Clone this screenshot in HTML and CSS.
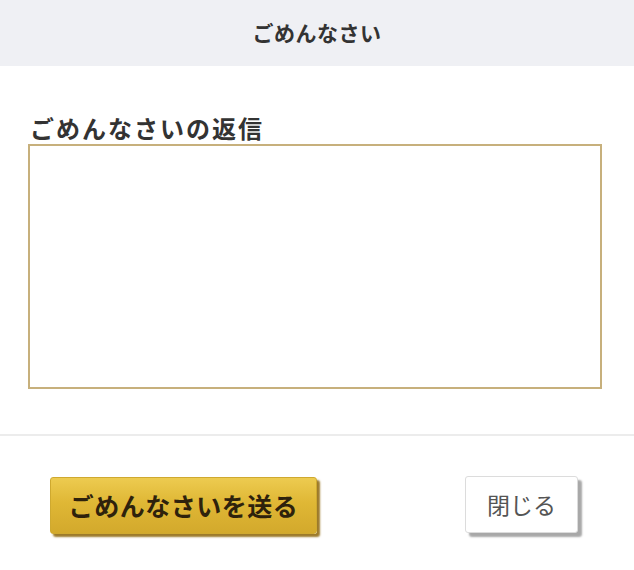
FILE: index.html
```html
<!DOCTYPE html>
<html lang="ja">
<head>
<meta charset="utf-8">
<link rel="stylesheet" href="styles.css">
</head>
<body>
<div class="page">
  <header class="header">ごめんなさい</header>
  <main class="main">
    <label class="label" for="reply">ごめんなさいの返信</label>
    <textarea id="reply" class="reply"></textarea>
  </main>
  <footer class="footer">
    <button class="btn btn-send">ごめんなさいを送る</button>
    <button class="btn btn-close">閉じる</button>
  </footer>
</div>
</body>
</html>
```
FILE: styles.css
```css
* { box-sizing: border-box; }
html, body {
  margin: 0;
  padding: 0;
  background: #ffffff;
}
body {
  font-family: "Noto Sans CJK JP", "Noto Sans", sans-serif;
  color: #333;
}
.page {
  width: 634px;
  height: 570px;
  display: flex;
  flex-direction: column;
  overflow: hidden;
}
.header {
  height: 66px;
  background: #eff0f4;
  display: flex;
  align-items: center;
  justify-content: center;
  font-size: 21px;
  font-weight: bold;
  color: #333;
  letter-spacing: 0.5px;
  padding-bottom: 2px;
}
.main {
  padding: 46px 32px 0 28px;
  display: flex;
  flex-direction: column;
  height: 370px;
  border-bottom: 2px solid #ececec;
}
.label {
  font-size: 24px;
  line-height: 32px;
  font-weight: bold;
  color: #333;
  padding-left: 2px;
  letter-spacing: 2px;
}
.reply {
  margin-top: 0;
  width: 574px;
  height: 245px;
  border: 2px solid #c7b07c;
  border-radius: 0;
  background: #fff;
  resize: none;
  outline: none;
  padding: 6px;
}
.footer {
  flex: 1;
  display: flex;
  justify-content: space-between;
  align-items: flex-start;
  padding: 40px 56px 0 50px;
  background: #fff;
}
.btn {
  font-family: "Noto Sans CJK JP", "Noto Sans", sans-serif;
  cursor: pointer;
  border-radius: 3px;
}
.btn-send {
  width: 267px;
  height: 57px;
  margin-top: 1px;
  border: 1px solid #cfa92f;
  background: linear-gradient(#edcb50, #dfb735 45%, #d3a92c);
  box-shadow: 3px 3px 2px #9c7a2a;
  font-size: 25px;
  font-weight: bold;
  color: #2e220c;
  letter-spacing: 0.5px;
  padding: 0 0 2px;
}
.btn-close {
  width: 113px;
  height: 57px;
  border: 1px solid #dcdcdc;
  background: #fff;
  box-shadow: 4px 4px 2px #a8a8a8;
  font-size: 23px;
  color: #555;
  padding: 0 0 2px;
}
```
